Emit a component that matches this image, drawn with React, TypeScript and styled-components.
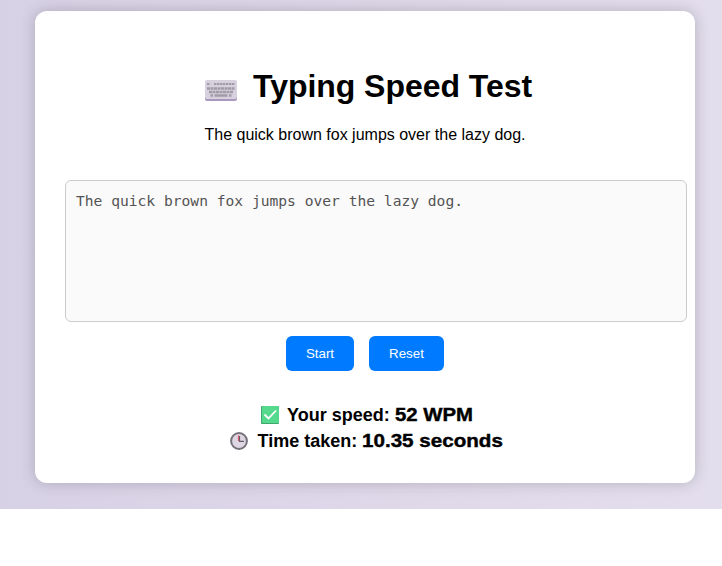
import React from 'react';
import styled, { createGlobalStyle } from 'styled-components';

const GlobalStyle = createGlobalStyle`
  body {
    margin: 0;
    background: #fff;
    color: #000;
    font-family: "Liberation Sans", Arial, sans-serif;
  }
`;

const Page = styled.main`
  box-sizing: border-box;
  height: 509px;
  padding: 11px 27px 26px 35px;
  background: linear-gradient(to right, #d7d1e6, #dfd8e9 55%, #e3deed);
  overflow: hidden;
`;

const Card = styled.section`
  box-sizing: border-box;
  display: flex;
  flex-direction: column;
  height: 472px;
  padding: 57px 30px 30px;
  border-radius: 12px;
  background: #fff;
  box-shadow: 0 0 15px rgba(0, 0, 0, 0.2);
`;

const Title = styled.h1`
  display: flex;
  gap: 16px;
  margin: 0 0 0 140px;
  font-size: 32px;
  line-height: 37px;
  letter-spacing: -0.04px;
  white-space: nowrap;

  svg {
    flex: none;
    margin-top: 12px;
  }
`;

const Prompt = styled.p`
  margin: 21px 0 0;
  font-size: 16px;
  line-height: 18px;
  text-align: center;
`;

const TypingArea = styled.textarea`
  box-sizing: content-box;
  display: block;
  flex: none;
  width: 100%;
  height: 120px;
  margin: 36px 0 0;
  padding: 10px;
  border: 1px solid #ccc;
  border-radius: 6px;
  outline: none;
  resize: none;
  overflow: hidden;
  background: #fafafa;
  color: #545454;
  font: 14.62px/20px "DejaVu Sans Mono", monospace;
`;

const Actions = styled.div`
  display: flex;
  justify-content: center;
  gap: 15px;
  margin-top: 14px;
`;

const ActionButton = styled.button<{ $width: number }>`
  width: ${({ $width }) => $width}px;
  height: 35px;
  padding: 0;
  border: 0;
  border-radius: 6px;
  background: #007bff;
  color: #fff;
  font: 13.333px "Liberation Sans", Arial, sans-serif;
`;

const Results = styled.div`
  display: flex;
  flex-direction: column;
  margin-top: 31px;
`;

const Result = styled.div<{ $indent: number; $gap: number }>`
  display: flex;
  align-items: center;
  height: 26px;
  margin-left: ${({ $indent }) => $indent}px;
  font-size: 18px;
  font-weight: 700;
  line-height: 26px;
  white-space: pre;

  svg {
    flex: none;
    margin-right: ${({ $gap }) => $gap}px;
  }
`;

const Value = styled.strong<{ $stretch: number }>`
  display: inline-block;
  font-weight: 900;
  transform: scaleX(${({ $stretch }) => $stretch});
  transform-origin: left center;
  -webkit-text-stroke: 0.4px #000;
`;

const KeyboardIcon = () => (
  <svg width="32" height="22" viewBox="0 0 32 22" aria-hidden="true">
    <rect y="1" width="32" height="20" rx="2" fill="#a999bc" />
    <rect width="32" height="19" rx="2" fill="#d7d0de" />
    <path d="M2 4h3M9 4h21" stroke="#a09ca5" strokeWidth="1.8" strokeDasharray="2.4 .6" />
    <path d="M2 8.5h28M4 12h24" stroke="#a09ca5" strokeWidth="2.5" strokeDasharray="3 .5" />
    <path d="M5.5 15.5h2.5m1.5 0h13m1.5 0h2.5" stroke="#a09ca5" strokeWidth="2.4" />
  </svg>
);

const CheckIcon = () => (
  <svg width="18" height="18" viewBox="0 0 18 18" aria-hidden="true">
    <rect width="18" height="18" rx="1" fill="#3fa66e" />
    <rect x="1" width="17" height="17" rx="1" fill="#55d98d" />
    <path d="m3.5 8.5 4 4 7.5-8" fill="none" stroke="#fff" strokeWidth="1.8" />
  </svg>
);

const ClockIcon = () => (
  <svg width="18" height="18" viewBox="0 0 18 18" aria-hidden="true">
    <circle cx="9" cy="9" r="7.9" fill="#ded7e3" stroke="#77717a" strokeWidth="2" />
    <path d="M8.5 3.5V9" stroke="#eb526f" strokeWidth="1.2" />
    <path d="M9.5 4v5.3H14" fill="none" stroke="#655f68" strokeWidth="1.2" />
  </svg>
);

export default function App() {
  return (
    <>
      <GlobalStyle />
      <Page>
        <Card>
          <Title><KeyboardIcon />Typing Speed Test</Title>
          <Prompt>The quick brown fox jumps over the lazy dog.</Prompt>
          <TypingArea readOnly spellCheck={false} value="The quick brown fox jumps over the lazy dog." />
          <Actions>
            <ActionButton $width={68}>Start</ActionButton>
            <ActionButton $width={75}>Reset</ActionButton>
          </Actions>
          <Results>
            <Result $indent={196} $gap={8}>
              <CheckIcon />Your speed: <Value $stretch={1.13}>52 WPM</Value>
            </Result>
            <Result $indent={165} $gap={9.5}>
              <ClockIcon />Time taken: <Value $stretch={1.145}>10.35 seconds</Value>
            </Result>
          </Results>
        </Card>
      </Page>
    </>
  );
}
